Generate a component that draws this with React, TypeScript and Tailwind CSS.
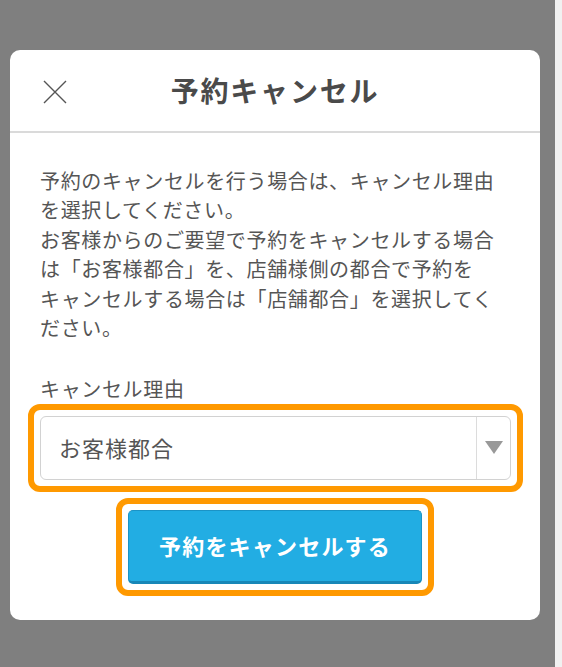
import React from "react";

const FONT = { fontFamily: '"Noto Sans CJK JP", "Noto Sans", sans-serif' };

const BODY_LINES = [
  "予約のキャンセルを行う場合は、キャンセル理由",
  "を選択してください。",
  "お客様からのご要望で予約をキャンセルする場合",
  "は「お客様都合」を、店舗様側の都合で予約を",
  "キャンセルする場合は「店舗都合」を選択してく",
  "ださい。",
];

export default function App() {
  return (
    <div className="flex h-[667px] w-[562px] overflow-hidden" style={FONT}>
      {/* dimmed backdrop */}
      <div className="flex-1 bg-[#7f7f7f] pl-[10px] pt-[50px]">
        <div className="w-[530px] h-[570px] bg-white rounded-[10px] flex flex-col">
          {/* header */}
          <div className="relative h-[83px] flex items-center justify-center border-b-2 border-[#dadada]">
            <button type="button" className="absolute left-[33px] top-[30px] w-[24px] h-[24px] text-[#555]">
              <svg viewBox="0 0 24 24" width="24" height="24" fill="none" stroke="currentColor" strokeWidth="1.4">
                <path d="M1 1 L23 23 M23 1 L1 23" />
              </svg>
            </button>
            <h1 className="text-[28px] leading-none font-bold text-[#4a4a4a] tracking-[1.8px] mt-[-2px]">予約キャンセル</h1>
          </div>

          {/* body */}
          <div className="pl-[30px] pr-[20px] pt-[33px] text-[#555] text-[20px] leading-[29.4px] tracking-[0.65px]">
            <p>
              {BODY_LINES.map((line, i) => (
                <span key={i} className="block whitespace-nowrap">{line}</span>
              ))}
            </p>
            <div className="mt-[32px]">キャンセル理由</div>

            {/* highlighted select */}
            <div className="-ml-[12px] w-[495px] border-[6px] border-[#ff9900] rounded-[12px] p-[6px]">
              <div className="flex h-[64px] border border-[#d2d2d2] rounded-[6px] bg-white">
                <div className="flex-1 flex items-center pl-[18px] text-[22px] tracking-[1px] text-[#555]">お客様都合</div>
                <div className="w-[34px] border-l border-[#dcdcdc] flex items-center justify-center">
                  <svg width="18" height="13" viewBox="0 0 18 13">
                    <path d="M0 0 H18 L9 13 Z" fill="#999" />
                  </svg>
                </div>
              </div>
            </div>

            {/* highlighted button */}
            <div className="mt-[6px] ml-[76px] w-[318px] border-[6px] border-[#ff9900] rounded-[12px] p-[6px]">
              <button
                type="button"
                className="w-full h-[74px] bg-[#22ade3] border border-[#1b93c6] border-b-[3px] border-b-[#1787b8] rounded-[5px] text-white text-[22px] font-bold tracking-[1.2px]"
              >
                予約をキャンセルする
              </button>
            </div>
          </div>
        </div>
      </div>
      {/* right edge strip */}
      <div className="w-[7px] bg-[#f1f1f1]" />
    </div>
  );
}
